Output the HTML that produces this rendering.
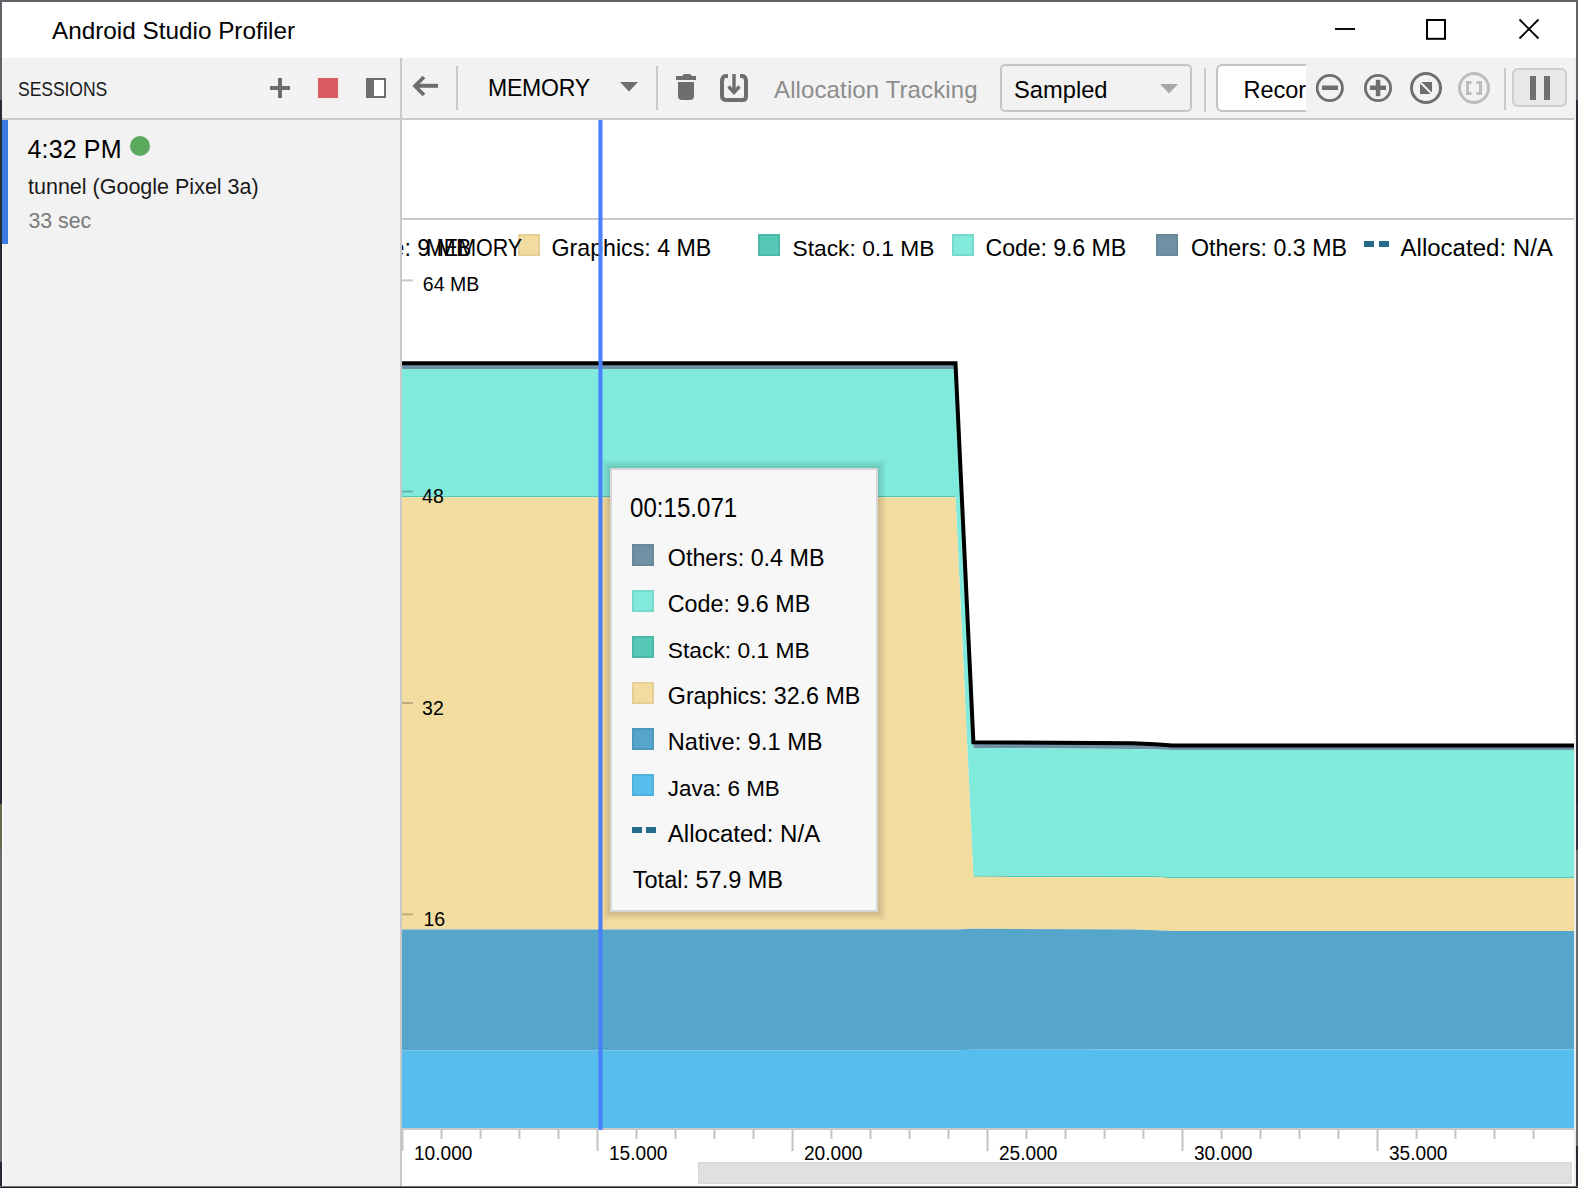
<!DOCTYPE html>
<html><head><meta charset="utf-8"><style>
html,body{margin:0;padding:0;width:1578px;height:1188px;overflow:hidden;background:#5f6268}
.r{position:absolute;box-sizing:content-box}
.t{position:absolute;white-space:nowrap;line-height:1;font-family:"Liberation Sans", sans-serif}
</style></head><body>
<div class="r" style="left:0px;top:0px;width:1578px;height:1188px;background:#5f6268;"></div>
<div class="r" style="left:2px;top:2px;width:1574px;height:56px;background:#ffffff;"></div>
<div class="r" style="left:0px;top:100px;width:2px;height:704px;background:#252a33;"></div>
<div class="r" style="left:0px;top:804px;width:2px;height:46px;background:#6b6a4c;"></div>
<div class="r" style="left:0px;top:850px;width:2px;height:312px;background:#6b6b6b;"></div>
<div class="r" style="left:0px;top:1162px;width:2px;height:26px;background:#232a35;"></div>
<div class="r" style="left:1576px;top:100px;width:2px;height:1088px;background:#252a33;"></div>
<div class="r" style="left:1576px;top:804px;width:2px;height:46px;background:#2e3440;"></div>
<div class="r" style="left:1576px;top:850px;width:2px;height:296px;background:#6b6b6b;"></div>
<div class="r" style="left:0px;top:1186px;width:1578px;height:1px;background:#6d7075;"></div>
<div class="r" style="left:0px;top:1187px;width:1578px;height:1px;background:#1f242c;"></div>
<div class="r" style="left:2px;top:58px;width:398px;height:1128px;background:#f2f2f2;"></div>
<div class="r" style="left:2px;top:244px;width:1px;height:942px;background:#ffffff;"></div>
<div class="r" style="left:400px;top:58px;width:2px;height:1128px;background:#c9c9c9;"></div>
<div class="r" style="left:2px;top:118px;width:398px;height:2px;background:#c9c9c9;"></div>
<div class="r" style="left:2px;top:120px;width:6px;height:124px;background:#3a7be0;"></div>
<div class="r" style="left:402px;top:58px;width:1174px;height:60px;background:#f2f2f2;"></div>
<div class="r" style="left:402px;top:118px;width:1172px;height:2px;background:#c9c9c9;"></div>
<div class="r" style="left:1574px;top:58px;width:2px;height:1128px;background:#ededed;"></div>
<div class="r" style="left:402px;top:120px;width:1172px;height:1066px;background:#ffffff;"></div>
<div class="r" style="left:402px;top:218px;width:1172px;height:2px;background:#c9c9c9;"></div>
<div class="t" style="left:52px;top:18.93px;font-size:24.3px;color:#000;letter-spacing:0px;">Android Studio Profiler</div>
<svg class="r" style="left:1320px;top:10px" width="250" height="40" viewBox="0 0 250 40"><line x1="15" y1="19" x2="35" y2="19" stroke="#000" stroke-width="1.9"/><rect x="107" y="10" width="18" height="18.8" fill="none" stroke="#000" stroke-width="2"/><line x1="199.5" y1="9.5" x2="218.5" y2="28.5" stroke="#000" stroke-width="1.8"/><line x1="218.5" y1="9.5" x2="199.5" y2="28.5" stroke="#000" stroke-width="1.8"/></svg>
<div class="t" style="left:18px;top:82.00px;font-size:17.6px;color:#1a1a1a;letter-spacing:-0.1px;transform:scale(1.0,1.14);transform-origin:0 14.90px;">SESSIONS</div>
<div class="r" style="left:270px;top:86px;width:20px;height:4px;background:#6e6e6e;"></div>
<div class="r" style="left:278px;top:78px;width:4px;height:20px;background:#6e6e6e;"></div>
<div class="r" style="left:318px;top:78px;width:20px;height:20px;background:#dc5a62;"></div>
<div class="r" style="left:366px;top:78px;width:20px;height:20px;background:#6e6e6e;"></div>
<div class="r" style="left:374px;top:80px;width:10px;height:16px;background:#ffffff;"></div>
<div class="t" style="left:27.5px;top:136.84px;font-size:25px;color:#000;letter-spacing:0.15px;">4:32 PM</div>
<div class="r" style="left:130px;top:136px;width:20px;height:20px;border-radius:50%;background:#5aa95c"></div>
<div class="t" style="left:28px;top:176.80px;font-size:21.5px;color:#1a1a1a;letter-spacing:0px;">tunnel (Google Pixel 3a)</div>
<div class="t" style="left:28.5px;top:210.57px;font-size:21.3px;color:#7a7a7a;letter-spacing:0px;">33 sec</div>
<svg class="r" style="left:402px;top:58px" width="60" height="60" viewBox="0 0 60 60"><path d="M 36 27.8 L 14 27.8" stroke="#6e6e6e" stroke-width="4" fill="none"/><path d="M 22 19 L 13 28 L 22 37" stroke="#6e6e6e" stroke-width="3.8" fill="none" stroke-linecap="butt"/></svg>
<div class="r" style="left:456px;top:66px;width:2px;height:44px;background:#c9c9c9;"></div>
<div class="t" style="left:488px;top:77.23px;font-size:23px;color:#000;letter-spacing:-0.2px;">MEMORY</div>
<svg class="r" style="left:618px;top:80px" width="22" height="14"><path d="M2 2 L20 2 L11 11.5 Z" fill="#6e6e6e"/></svg>
<div class="r" style="left:656px;top:66px;width:2px;height:44px;background:#c9c9c9;"></div>
<svg class="r" style="left:670px;top:70px" width="32" height="36" viewBox="0 0 32 36"><path d="M6 6 L12 6 L14 4 L20 4 L22 6 L26 6 L26 10 L6 10 Z" fill="#6e6e6e"/><path d="M8 12 L24 12 L24 26 Q24 30 20 30 L12 30 Q8 30 8 26 Z" fill="#6e6e6e"/></svg>
<svg class="r" style="left:714px;top:68px" width="40" height="40" viewBox="0 0 40 40"><path d="M14 8 L12 8 Q8 8 8 14 L8 28 Q8 32 13 32 L29 32 Q32 32 32 28 L32 14 Q32 8 28 8 L26 8" stroke="#6e6e6e" stroke-width="4" fill="none"/><path d="M20 6 L20 25" stroke="#6e6e6e" stroke-width="3.4" fill="none"/><path d="M14.5 18.5 L20 24.5 L25.5 18.5" stroke="#6e6e6e" stroke-width="3.4" fill="none"/></svg>
<div class="t" style="left:774px;top:77.88px;font-size:24px;color:#8c8c8c;letter-spacing:0.12px;">Allocation Tracking</div>
<div class="r" style="left:1000px;top:64px;width:188px;height:44px;border:2px solid #c6c6c6;border-radius:5px;background:#f2f2f2"></div>
<div class="t" style="left:1014px;top:79.14px;font-size:23.7px;color:#000;letter-spacing:0px;">Sampled</div>
<svg class="r" style="left:1158px;top:82px" width="22" height="14"><path d="M2 2 L20 2 L11 11.5 Z" fill="#a8a8a8"/></svg>
<div class="r" style="left:1204px;top:68px;width:2px;height:44px;background:#c9c9c9;"></div>
<div class="r" style="left:1216px;top:64px;width:90px;height:48px;overflow:hidden"><div style="position:absolute;left:0;top:0;width:120px;height:44px;border:2px solid #c2c2c2;border-radius:6px;background:#fff;"></div><div class="t" style="left:27.5px;top:14.71px;font-size:23.5px;color:#000">Record</div></div>
<svg class="r" style="left:1306px;top:64px" width="200" height="48" viewBox="0 0 200 48"><circle cx="23.8" cy="24" r="12.6" stroke="#6e6e6e" stroke-width="2.8" fill="none"/><rect x="16" y="21.5" width="16" height="4.5" fill="#6e6e6e"/><circle cx="72" cy="24" r="12.6" stroke="#6e6e6e" stroke-width="2.8" fill="none"/><rect x="64" y="21.5" width="16" height="4.5" fill="#6e6e6e"/><rect x="69.8" y="15.8" width="4.5" height="16.4" fill="#6e6e6e"/><circle cx="120" cy="24" r="14.5" stroke="#6e6e6e" stroke-width="3" fill="none"/><rect x="114" y="18" width="12" height="12" fill="#6e6e6e"/><line x1="113" y1="17" x2="127" y2="31" stroke="#f2f2f2" stroke-width="2"/><circle cx="168" cy="24" r="14.5" stroke="#bdbdbd" stroke-width="3" fill="none"/><path d="M165.5 18.5 L161.5 18.5 L161.5 29.5 L165.5 29.5" stroke="#bdbdbd" stroke-width="3" fill="none"/><path d="M170.5 18.5 L174.5 18.5 L174.5 29.5 L170.5 29.5" stroke="#bdbdbd" stroke-width="3" fill="none"/></svg>
<div class="r" style="left:1504px;top:68px;width:2px;height:42px;background:#c9c9c9;"></div>
<div class="r" style="left:1512px;top:68px;width:51px;height:35px;border:2px solid #cdcdcd;border-radius:6px;background:#e8e8e8"></div>
<div class="r" style="left:1530px;top:76px;width:6px;height:24px;background:#6e6e6e;"></div>
<div class="r" style="left:1544px;top:76px;width:6px;height:24px;background:#6e6e6e;"></div>
<svg class="r" style="left:0;top:0" width="1578" height="1188" viewBox="0 0 1578 1188"><polygon points="402,363.3 955.5,363.3 973.4,742.3 1132.6,743.2 1155,744.3 1172.5,745.5 1574,745.5 1574,750 1172.5,750 1155,749.5 1132.6,749 973.4,748 955.5,369 402,369" fill="#6f91a5"/><polygon points="402,369 955.5,369 973.4,748 1132.6,749 1155,749.5 1172.5,750 1574,750 1574,877 1172.5,877 1155,876 1132.6,876 973.4,875.5 955.5,496 402,496" fill="#80ebdc"/><polygon points="402,496 955.5,496 973.4,875.5 1132.6,876 1155,876 1172.5,877 1574,877 1574,878.3 1172.5,878.3 1155,877.3 1132.6,877.3 973.4,876.8 955.5,497.3 402,497.3" fill="#50c8b3"/><polygon points="402,497.3 955.5,497.3 973.4,876.8 1132.6,877.3 1155,877.3 1172.5,878.3 1574,878.3 1574,931 1172.5,931 1155,930.2 1132.6,929.6 973.4,928.8 955.5,929.5 402,929.5" fill="#f3dca0"/><polygon points="402,929.5 955.5,929.5 973.4,928.8 1132.6,929.6 1155,930.2 1172.5,931 1574,931 1574,1049.6 1172.5,1049.6 1155,1049.6 1132.6,1049.6 973.4,1049.8 955.5,1050.2 402,1050.2" fill="#56a6cb"/><polygon points="402,1050.2 955.5,1050.2 973.4,1049.8 1132.6,1049.6 1155,1049.6 1172.5,1049.6 1574,1049.6 1574,1128 402,1128" fill="#57bdec"/><polyline points="402,363.3 955.5,363.3 973.4,742.3 1132.6,743.2 1155,744.3 1172.5,745.5 1574,745.5" fill="none" stroke="#000" stroke-width="4" stroke-linejoin="miter"/><rect x="402" y="279.4" width="11" height="2" fill="rgba(0,0,0,0.22)"/><rect x="402" y="490.5" width="11" height="2" fill="rgba(0,0,0,0.22)"/><rect x="402" y="702" width="11" height="2" fill="rgba(0,0,0,0.22)"/><rect x="402" y="913.3" width="11" height="2" fill="rgba(0,0,0,0.22)"/><rect x="402" y="1128" width="1172" height="2" fill="#cbc8c8"/><rect x="401.5" y="1130" width="2" height="21" fill="#c4c4c4"/><rect x="440.5" y="1130" width="2" height="9" fill="#c4c4c4"/><rect x="479.5" y="1130" width="2" height="9" fill="#c4c4c4"/><rect x="518.5" y="1130" width="2" height="9" fill="#c4c4c4"/><rect x="557.5" y="1130" width="2" height="9" fill="#c4c4c4"/><rect x="596.5" y="1130" width="2" height="21" fill="#c4c4c4"/><rect x="635.5" y="1130" width="2" height="9" fill="#c4c4c4"/><rect x="674.5" y="1130" width="2" height="9" fill="#c4c4c4"/><rect x="713.5" y="1130" width="2" height="9" fill="#c4c4c4"/><rect x="752.5" y="1130" width="2" height="9" fill="#c4c4c4"/><rect x="791.5" y="1130" width="2" height="21" fill="#c4c4c4"/><rect x="830.5" y="1130" width="2" height="9" fill="#c4c4c4"/><rect x="869.5" y="1130" width="2" height="9" fill="#c4c4c4"/><rect x="908.5" y="1130" width="2" height="9" fill="#c4c4c4"/><rect x="947.5" y="1130" width="2" height="9" fill="#c4c4c4"/><rect x="986.5" y="1130" width="2" height="21" fill="#c4c4c4"/><rect x="1025.5" y="1130" width="2" height="9" fill="#c4c4c4"/><rect x="1064.5" y="1130" width="2" height="9" fill="#c4c4c4"/><rect x="1103.5" y="1130" width="2" height="9" fill="#c4c4c4"/><rect x="1142.5" y="1130" width="2" height="9" fill="#c4c4c4"/><rect x="1181.5" y="1130" width="2" height="21" fill="#c4c4c4"/><rect x="1220.5" y="1130" width="2" height="9" fill="#c4c4c4"/><rect x="1259.5" y="1130" width="2" height="9" fill="#c4c4c4"/><rect x="1298.5" y="1130" width="2" height="9" fill="#c4c4c4"/><rect x="1337.5" y="1130" width="2" height="9" fill="#c4c4c4"/><rect x="1376.5" y="1130" width="2" height="21" fill="#c4c4c4"/><rect x="1415.5" y="1130" width="2" height="9" fill="#c4c4c4"/><rect x="1454.5" y="1130" width="2" height="9" fill="#c4c4c4"/><rect x="1493.5" y="1130" width="2" height="9" fill="#c4c4c4"/><rect x="1532.5" y="1130" width="2" height="9" fill="#c4c4c4"/></svg>
<div class="t" style="left:422.8px;top:275.49px;font-size:19.5px;color:#000;letter-spacing:0px;">64 MB</div>
<div class="t" style="left:422.1px;top:487.19px;font-size:19.5px;color:#000;letter-spacing:0px;">48</div>
<div class="t" style="left:422.1px;top:698.69px;font-size:19.5px;color:#000;letter-spacing:0px;">32</div>
<div class="t" style="left:423.5px;top:910.49px;font-size:19.5px;color:#000;letter-spacing:0px;">16</div>
<div class="t" style="left:414px;top:1143.83px;font-size:19.1px;color:#000;letter-spacing:0px;transform:scale(1.0,1.08);transform-origin:0 16.17px;">10.000</div>
<div class="t" style="left:609px;top:1143.83px;font-size:19.1px;color:#000;letter-spacing:0px;transform:scale(1.0,1.08);transform-origin:0 16.17px;">15.000</div>
<div class="t" style="left:804px;top:1143.83px;font-size:19.1px;color:#000;letter-spacing:0px;transform:scale(1.0,1.08);transform-origin:0 16.17px;">20.000</div>
<div class="t" style="left:999px;top:1143.83px;font-size:19.1px;color:#000;letter-spacing:0px;transform:scale(1.0,1.08);transform-origin:0 16.17px;">25.000</div>
<div class="t" style="left:1194px;top:1143.83px;font-size:19.1px;color:#000;letter-spacing:0px;transform:scale(1.0,1.08);transform-origin:0 16.17px;">30.000</div>
<div class="t" style="left:1389px;top:1143.83px;font-size:19.1px;color:#000;letter-spacing:0px;transform:scale(1.0,1.08);transform-origin:0 16.17px;">35.000</div>
<div class="r" style="left:698px;top:1162px;width:872px;height:20px;background:#e0e0e0;border:1px solid #d6d6d6"></div>
<div class="r" style="left:402px;top:225px;width:120px;height:40px;overflow:hidden"><div class="t" style="left:-10.50px;top:11.76px;font-size:23.2px;color:#000">e: 9 MB</div></div>
<div class="r" style="left:518px;top:234px;width:18px;height:18px;background:#f3dca0;border:2px solid #e5cf97"></div>
<div class="t" style="left:425.5px;top:236.76px;font-size:23.2px;color:#000;letter-spacing:0px;transform:scale(0.925,1.0);transform-origin:0 19.64px;">MEMORY</div>
<div class="t" style="left:551.5px;top:236.76px;font-size:23.2px;color:#000;letter-spacing:0px;">Graphics: 4 MB</div>
<div class="r" style="left:758px;top:234px;width:18px;height:18px;background:#55c9b5;border:2px solid #4db8a6"></div>
<div class="t" style="left:792.5px;top:237.10px;font-size:22.8px;color:#000;letter-spacing:0px;">Stack: 0.1 MB</div>
<div class="r" style="left:952px;top:234px;width:18px;height:18px;background:#80ebdc;border:2px solid #76d9cb"></div>
<div class="t" style="left:985.5px;top:236.76px;font-size:23.2px;color:#000;letter-spacing:-0.1px;">Code: 9.6 MB</div>
<div class="r" style="left:1156px;top:234px;width:18px;height:18px;background:#6f91a5;border:2px solid #68889b"></div>
<div class="t" style="left:1191px;top:236.76px;font-size:23.2px;color:#000;letter-spacing:0px;">Others: 0.3 MB</div>
<div class="r" style="left:1364px;top:241px;width:10px;height:6px;background:#256a8a;"></div>
<div class="r" style="left:1378.5px;top:241px;width:10px;height:6px;background:#256a8a;"></div>
<div class="t" style="left:1400.5px;top:236.04px;font-size:24.05px;color:#000;letter-spacing:0px;">Allocated: N/A</div>
<svg class="r" style="left:590px;top:120px" width="20" height="1010"><rect x="8.4" y="0" width="4.1" height="1010" fill="#4a80fd"/></svg>
<div class="r" style="left:610px;top:468px;width:264px;height:440px;background:#f7f7f7;border:2px solid #d6d6d8;box-shadow:0 0 0 2px rgba(0,0,0,0.04),0 0 0 4px rgba(0,0,0,0.04),0 0 0 6px rgba(0,0,0,0.035),0 0 0 8px rgba(0,0,0,0.03)"></div>
<div class="t" style="left:630px;top:496.60px;font-size:24.1px;color:#000;letter-spacing:0px;transform:scale(1.0,1.12);transform-origin:0 20.40px;">00:15.071</div>
<div class="r" style="left:632px;top:544px;width:18px;height:18px;background:#6f91a5;border:2px solid #68889b"></div>
<div class="t" style="left:667.8px;top:546.78px;font-size:23.3px;color:#000;letter-spacing:0px;">Others: 0.4 MB</div>
<div class="r" style="left:632px;top:590px;width:18px;height:18px;background:#80ebdc;border:2px solid #76d9cb"></div>
<div class="t" style="left:667.8px;top:592.78px;font-size:23.3px;color:#000;letter-spacing:0px;">Code: 9.6 MB</div>
<div class="r" style="left:632px;top:636px;width:18px;height:18px;background:#55c9b5;border:2px solid #4db8a6"></div>
<div class="t" style="left:667.8px;top:639.20px;font-size:22.8px;color:#000;letter-spacing:0px;">Stack: 0.1 MB</div>
<div class="r" style="left:632px;top:682px;width:18px;height:18px;background:#f3dca0;border:2px solid #e5cf97"></div>
<div class="t" style="left:667.8px;top:684.82px;font-size:23.25px;color:#000;letter-spacing:0px;">Graphics: 32.6 MB</div>
<div class="r" style="left:632px;top:728px;width:18px;height:18px;background:#56a6cb;border:2px solid #4f98bb"></div>
<div class="t" style="left:667.8px;top:730.52px;font-size:23.6px;color:#000;letter-spacing:0px;">Native: 9.1 MB</div>
<div class="r" style="left:632px;top:774px;width:18px;height:18px;background:#57bdec;border:2px solid #4fb0dc"></div>
<div class="t" style="left:667.8px;top:777.54px;font-size:22.4px;color:#000;letter-spacing:0px;">Java: 6 MB</div>
<div class="r" style="left:632px;top:827px;width:10px;height:6px;background:#256a8a;"></div>
<div class="r" style="left:646px;top:827px;width:10px;height:6px;background:#256a8a;"></div>
<div class="t" style="left:667.8px;top:822.14px;font-size:24.05px;color:#000;letter-spacing:0px;">Allocated: N/A</div>
<div class="t" style="left:632.8px;top:868.71px;font-size:23.5px;color:#000;letter-spacing:0px;">Total: 57.9 MB</div>
</body></html>
